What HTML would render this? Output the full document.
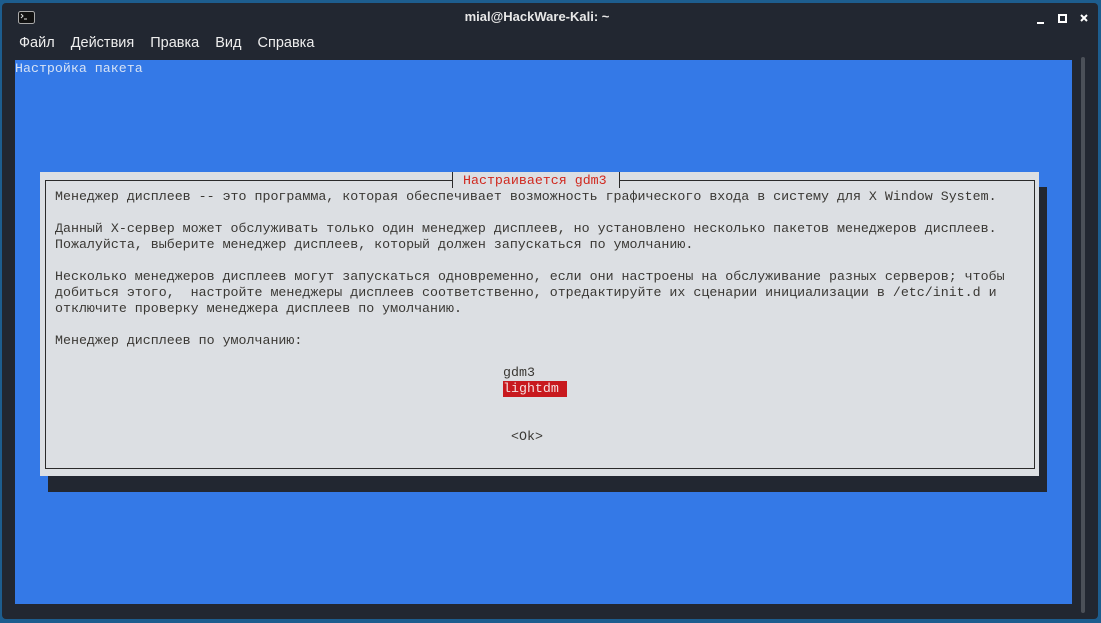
<!DOCTYPE html>
<html><head><meta charset="utf-8"><style>
*{margin:0;padding:0;box-sizing:border-box}
body{width:1101px;height:623px;background:#1d5d8e;position:relative;overflow:hidden;font-family:"Liberation Sans","DejaVu Sans",sans-serif}
.win{position:absolute;left:2px;top:3px;width:1096px;height:616px;background:#222731;border-radius:4px}
.title{position:absolute;top:6px;left:0;width:1070px;text-align:center;color:#e8e8e8;font-size:13px;font-weight:bold}
.menu{position:absolute;top:32px;left:17px;color:#eee;font-size:14.5px}
.menu span{margin-right:12px}
.term{position:absolute;left:15px;top:60px;width:1057px;height:544px;background:#3479e7;overflow:hidden}
.mono{font-family:"Liberation Mono","DejaVu Sans Mono",monospace;font-size:13.3px;line-height:16px;white-space:pre;position:absolute}
.sb{position:absolute;left:1081px;top:57px;width:4px;height:556px;background:#4b5058;border-radius:2px}
.shadow{position:absolute;left:48px;top:187px;width:999px;height:305px;background:#222731}
.dlg{position:absolute;left:40px;top:172px;width:999px;height:304px;background:#dcdfe3}
.bord{position:absolute;left:45px;top:180px;width:990px;height:289px;border:1.5px solid #2a2a2a}
.tt{position:absolute;left:452px;top:172px;width:168px;height:16px;background:#dcdfe3;border-left:1.5px solid #2a2a2a;border-right:1.5px solid #2a2a2a}
</style></head><body>
<div class="win">
<svg style="position:absolute;left:16px;top:8px" width="18" height="14"><rect x="0.5" y="0.5" width="16" height="12" rx="2" fill="#111" stroke="#aaa"/><path d="M3 3l2 2-2 2M6 8h3" stroke="#ddd" fill="none"/></svg>
<div class="title">mial@HackWare-Kali: ~</div>
<svg style="position:absolute;left:1033px;top:10px" width="60" height="14"><path d="M2 10h7" stroke="#fff" stroke-width="2"/><rect x="24" y="2" width="7" height="7" fill="none" stroke="#fff" stroke-width="2"/><path d="M46 2l6 6M52 2l-6 6" stroke="#fff" stroke-width="2"/></svg>
<div class="menu"><span>Файл</span> <span>Действия</span> <span>Правка</span> <span>Вид</span> <span>Справка</span></div>
</div>
<div class="term"></div>
<div class="sb"></div>
<div class="mono" style="left:15px;top:61px;color:#d6e2f5">Настройка пакета</div>
<div class="shadow"></div>
<div class="dlg"></div>
<div class="bord"></div>
<div class="tt"></div>
<div class="mono" style="left:463px;top:173px;color:#d0281e">Настраивается gdm3</div>
<div class="mono" style="left:55px;top:189px;color:#3a3834">Менеджер дисплеев -- это программа, которая обеспечивает возможность графического входа в систему для X Window System.

Данный X-сервер может обслуживать только один менеджер дисплеев, но установлено несколько пакетов менеджеров дисплеев.
Пожалуйста, выберите менеджер дисплеев, который должен запускаться по умолчанию.

Несколько менеджеров дисплеев могут запускаться одновременно, если они настроены на обслуживание разных серверов; чтобы
добиться этого,  настройте менеджеры дисплеев соответственно, отредактируйте их сценарии инициализации в /etc/init.d и
отключите проверку менеджера дисплеев по умолчанию.

Менеджер дисплеев по умолчанию:</div>
<div class="mono" style="left:503px;top:365px;color:#3a3834">gdm3</div>
<div class="mono" style="left:503px;top:381px;background:#c8191e;color:#f4dede;width:64px">lightdm </div>
<div class="mono" style="left:511px;top:429px;color:#3a3834">&lt;Ok&gt;</div>
</body></html>
